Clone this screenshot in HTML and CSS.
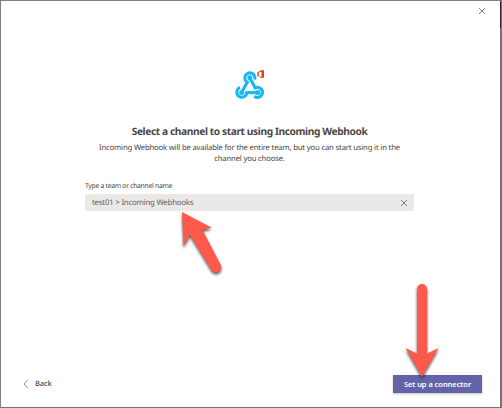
FILE: index.html
```
<!DOCTYPE html>
<html lang="en">
<head>
<meta charset="utf-8">
<title>Incoming Webhook</title>
<link rel="stylesheet" href="styles.css">
</head>
<body>
<main class="dialog">
  <header class="top">
    <svg class="close" viewBox="0 0 8 8"><path d="M1 1l6 6M7 1l-6 6"/></svg>
  </header>
  <svg class="logo" viewBox="0 0 36 36">
    <g class="hook">
      <path d="M22.600 13.500A5 5 0 1 0 15.200 16.200L9.700 26.200"/>
      <path d="M8 21.600A5 5 0 1 0 14.800 26.700H25.800"/>
      <path d="M17.800 11.800L23.200 21.900A5 5 0 1 1 22.300 30.200"/>
    </g>
    <g class="dots"><circle cx="17.8" cy="11.8" r="2.5"/><circle cx="9.700" cy="26.500" r="2.5"/><circle cx="25.900" cy="26.500" r="2.5"/></g>
    <path class="office" d="M25.3 6.2L30 4l2 .6v6.8l-2 .6-4.7-1.800 4.200.5V5.600l-2.700.7v3.500l-1.500.5z"/>
  </svg>
  <h1 class="title"><span>Select a channel to start using Incoming Webhook</span></h1>
  <p class="desc">Incoming Webhook will be available for the entire team, but you can start using it in the<br>channel you choose.</p>
  <section class="field">
    <label class="label">Type a team or channel name</label>
    <div class="input"><span>test01 &gt; Incoming Webhooks</span>
      <svg class="clear" viewBox="0 0 8 8"><path d="M1 1l6 6M7 1l-6 6"/></svg>
    </div>
  </section>
  <footer class="footer">
    <div class="back"><svg viewBox="0 0 6 10"><path d="M5 .8L1 5l4 4.2"/></svg><span>Back</span></div>
    <button class="setup">Set up a connector</button>
  </footer>
</main>
<div class="edge"></div>
<svg class="arrows" viewBox="0 0 502 408">
  <path d="M182 212L211.500 227.500L202.500 230L220.500 264.500A5 5 0 0 1 211.500 270L190 235L183.500 246.500Z"/>
  <path d="M422 377L405.500 348L417 353.500V289A5 5 0 0 1 427 289V353.500L438.500 348Z"/>
</svg>
</body>
</html>
```
FILE: styles.css
```
* { box-sizing: border-box; }
body { margin: 0; font-family: "Noto Sans", sans-serif; color: #484644; text-rendering: geometricPrecision; }
.dialog {
  width: 502px; height: 408px; background: #fff;
  border: 1px solid #808080; border-right: 2px solid #737373; border-bottom-color: #737373;
  display: flex; flex-direction: column; align-items: center;
}
.top { width: 100%; height: 65px; display: flex; justify-content: flex-end; padding: 6px 14px 0 0; }
.close, .clear { width: 8px; height: 8px; fill: none; stroke: #605e5c; stroke-width: .8; }
.logo { width: 36px; height: 36px; flex: none; margin-right: 1px; }
.hook { fill: none; stroke: #18b9f1; stroke-width: 3.2; }
.dots { fill: #18b9f1; }
.office { fill: #dc3e15; }
.title { margin: 21px 2px 0 0; font-size: 10.2px; line-height: 16px; font-weight: 700; letter-spacing: -.4px; white-space: nowrap; }
.desc { margin: 4px 2px 0 0; font-size: 7.7px; line-height: 11px; letter-spacing: -.17px; text-align: center; white-space: nowrap; }
.field { width: 329px; margin: 15px 2px 0 0; }
.label { display: block; font-size: 6.8px; line-height: 12px; letter-spacing: -.28px; }
.input {
  height: 17px; margin-top: 2px; padding: 0 6px 0 7px; background: #ebe9e8; border-radius: 1px;
  display: flex; align-items: center; justify-content: space-between; font-size: 7.8px; letter-spacing: -.2px; color: #605e5c;
}
.footer { width: 100%; margin-top: auto; padding: 0 18px 14px 22px; display: flex; justify-content: space-between; align-items: center; }
.back { display: flex; align-items: center; gap: 6px; font-size: 7.5px; font-weight: 500; letter-spacing: -.15px; }
.back svg { width: 6px; height: 10px; fill: none; stroke: #777; stroke-width: .8; }
.setup {
  width: 89px; height: 18px; padding: 0; border: 0; background: #6264a7; color: #fff;
  font: 600 7.5px "Noto Sans", sans-serif; letter-spacing: -.06px; box-shadow: 0 1px 2px rgba(0,0,0,.25);
}
.edge { position: absolute; left: 500px; top: 1px; width: 1px; height: 27px; background: #242733; }
.arrows { position: absolute; left: 0; top: 0; width: 502px; height: 408px; fill: #ff594c; filter: drop-shadow(0 2px 1.500px rgba(0,0,0,.65)); pointer-events: none; }
```
